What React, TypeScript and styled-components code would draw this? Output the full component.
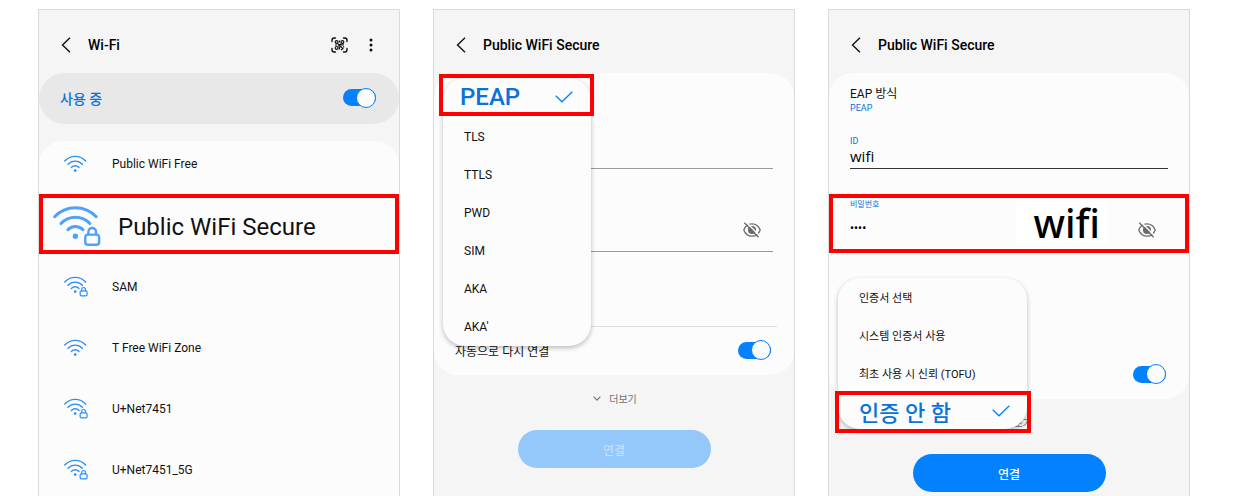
import React from "react";
import styled, { createGlobalStyle, css } from "styled-components";

const blue = "#0381fe";
const linkBlue = "#0a73d9";
const red = "#fe0000";

const GlobalStyle = createGlobalStyle`
  *, *::before, *::after { box-sizing: border-box; }
  body { margin: 0; background: #fff; }
  body, button, input { font-family: Roboto, "Noto Sans CJK KR", sans-serif; color: #111; }
  button, input { margin: 0; padding: 0; border: 0; background: none; }
  button { cursor: pointer; }
  h2, ul, p { margin: 0; padding: 0; }
  ul { list-style: none; }
  svg { display: block; flex: none; }
`;

const Page = styled.main`
  display: grid;
  grid-template-columns: repeat(3, minmax(0, 1fr));
  gap: 33px;
  min-height: 100vh;
  padding: 9px 47px 0 38px;
`;

const Phone = styled.section`
  display: flex;
  flex-direction: column;
  border: 1px solid #dadada;
  border-bottom: 0;
  background: #f5f5f5;
`;

const Header = styled.header`
  display: flex;
  align-items: center;
  height: 63px;
  padding: 7px 26px 0 22px;
`;

const IconButton = styled.button`
  display: flex;
  align-items: center;
  justify-content: center;
`;

const BackButton = styled(IconButton)`
  width: 10px;
  margin-right: 17px;
`;

const Title = styled.h2`
  flex: 1;
  font-size: 14px;
  line-height: 20px;
  font-weight: 500;
  color: #000;
`;

const HeaderActions = styled.div`
  display: flex;
  align-items: center;
  gap: 21px;
`;

const PowerBar = styled.label`
  display: flex;
  align-items: center;
  justify-content: space-between;
  height: 51px;
  padding: 0 23px 2px 21px;
  border-radius: 26px;
  background: #e8e8e8;
  color: ${linkBlue};
  font-size: 14px;
  font-weight: 500;
`;

const Toggle = styled.input`
  appearance: none;
  display: flex;
  align-items: center;
  justify-content: flex-end;
  width: 33px;
  height: 17px;
  border-radius: 9px;
  background: #b5b5b5;
  cursor: pointer;

  &:checked { background: ${blue}; }
  &::before {
    content: "";
    flex: none;
    width: 20px;
    height: 20px;
    border: 1px solid ${blue};
    border-radius: 50%;
    background: #fcfcfc;
  }
`;

const NetworkList = styled.ul`
  display: flex;
  flex: 1;
  flex-direction: column;
  gap: 23px;
  margin-top: 17px;
  padding: 3px 0 8px;
  border-radius: 24px 24px 0 0;
  background: #fcfcfc;
`;

const NetworkItem = styled.li<{ $selected?: boolean }>`
  ${(p) => p.$selected && css`margin: -11px 0 -10px;`}
`;

const NetworkName = styled.span`
  padding-top: 2px;
`;

const NetworkButton = styled.button<{ $selected?: boolean }>`
  display: flex;
  align-items: center;
  width: 100%;
  height: 38px;
  gap: 24px;
  padding-left: 25px;
  font-size: 12px;
  text-align: left;
  color: #111;
  svg { color: #2f8ef7; }

  ${(p) => p.$selected && css`
    height: 60px;
    gap: 17px;
    padding: 4px 0 0 10px;
    border: 4px solid ${red};
    font-size: 24px;
    svg { color: #4fa1fb; }
  `}
`;

const Card = styled.form`
  position: relative;
  border-radius: 24px;
  background: #fcfcfc;
`;

const Method = styled.div`
  height: 62px;
  padding: 13px 21px 0;
`;

const MethodName = styled.p`
  font-size: 12px;
  line-height: 16px;
`;

const MethodValue = styled.p`
  font-size: 9px;
  line-height: 12px;
  color: ${linkBlue};
`;

const Field = styled.div<{ $color: string }>`
  display: flex;
  align-items: flex-end;
  height: 34px;
  margin: 0 21px;
  border-bottom: 1px solid ${(p) => p.$color};
`;

const PlainPasswordField = styled(Field)`
  height: 58px;
  margin-top: 25px;
  padding: 0 12px 12px 0;
`;

const FieldColumn = styled.div`
  flex: 1;
  min-width: 0;
`;

const FieldLabel = styled.label<{ $small?: boolean }>`
  display: block;
  font-size: ${(p) => (p.$small ? 8 : 9)}px;
  line-height: ${(p) => (p.$small ? 14 : 12)}px;
  color: ${linkBlue};
`;

const TextInput = styled.input`
  display: block;
  width: 100%;
  height: 21px;
  padding-bottom: 3px;
  font-family: "Open Sans", sans-serif;
  font-size: 15px;
  color: #000;
  outline: 0;
`;

const SecretInput = styled(TextInput)`
  height: 32px;
  padding: 0;
  font-family: Roboto, sans-serif;
  font-size: 12px;
`;

const PasswordBox = styled.div`
  display: flex;
  align-items: flex-start;
  height: 59px;
  margin-top: 25px;
  padding: 0 29px 0 17px;
  border: 4px solid ${red};
`;

const PasswordHint = styled.span`
  margin: 2px 30px 0 0;
  padding: 0 8px 0 18px;
  background: #fff;
  font-family: "Noto Sans", sans-serif;
  font-size: 39px;
  line-height: 46px;
  font-weight: 500;
  color: #000;
`;

const RevealButton = styled(IconButton)`
  height: 18px;
  color: #6b6b6b;
  ${PasswordBox} & { margin-top: 23px; }
`;

const Reconnect = styled.div<{ $space: number; $line?: boolean }>`
  margin-top: ${(p) => p.$space}px;
  padding: 0 17px 0 21px;
  &::before {
    content: "";
    display: block;
    height: 1px;
    background: ${(p) => (p.$line ? "#dedede" : "transparent")};
  }
`;

const ReconnectLabel = styled.label`
  display: flex;
  align-items: center;
  justify-content: space-between;
  height: 48px;
  padding: 0 6px 2px 0;
  font-size: 12px;
`;

const ReconnectToggle = styled(Toggle)`
  margin-left: auto;
`;

const Menu = styled.ul<{ $top: number; $width: number }>`
  position: absolute;
  top: ${(p) => p.$top}px;
  left: 9px;
  width: ${(p) => p.$width}px;
  border-radius: 22px;
  background: #fcfcfc;
  box-shadow: 0 2px 5px rgba(0, 0, 0, 0.26);
`;

const Option = styled.button<{ $size?: number }>`
  display: flex;
  align-items: center;
  justify-content: space-between;
  width: 100%;
  height: 38px;
  padding: 0 21px;
  font-size: ${(p) => p.$size ?? 12}px;
  text-align: left;
`;

const SelectedOption = styled(Option)<{ $last?: boolean }>`
  width: calc(100% + 7px);
  height: 42px;
  margin: ${(p) => (p.$last ? "-1px -3px -4px" : "-4px -4px 2px")};
  padding: ${(p) => (p.$last ? "0 17px 2px 20px" : "3px 17px 0")};
  border: 4px solid ${red};
  font-weight: 500;
  color: ${linkBlue};
  svg { color: ${blue}; }
`;

const MoreButton = styled.button`
  display: flex;
  align-items: center;
  align-self: center;
  gap: 8px;
  height: 16px;
  margin: 15px 0 1px 2px;
  font-size: 10px;
  color: #707070;
`;

const ConnectButton = styled.button`
  align-self: center;
  width: 193px;
  height: 38px;
  margin-top: 23px;
  border-radius: 20px;
  background: ${blue};
  font-size: 12px;
  font-weight: 500;
  color: #fff;
  &:disabled { background: #94c7fa; color: #c2dffc; cursor: default; }
`;

const BackIcon = () => (
  <svg width="10" height="16" viewBox="0 0 10 16" fill="none" stroke="#111" strokeWidth="1.4">
    <path d="M9 .7 1.5 8 9 15.3" />
  </svg>
);

const ScanIcon = () => (
  <svg width="17" height="16" viewBox="0 0 17 16" fill="none" stroke="#111" strokeWidth="1.4">
    <path d="M1 4.6V3.2Q1 1 3.2 1h1.3M12.5 1h1.3Q16 1 16 3.2v1.4M16 11.4v1.4q0 2.2-2.2 2.2h-1.3M4.5 15H3.2Q1 15 1 12.8v-1.4" strokeLinecap="round" />
    <g strokeWidth="1.2">
      <circle cx="5.6" cy="5" r="1.4" />
      <circle cx="11.4" cy="5" r="1.4" />
      <circle cx="5.6" cy="10.9" r="1.4" />
      <path d="M8.5 3.4v2M6.8 6.8l5.6 5.4M4 8h2M10.2 7.8h2.6M8.4 9.8v2.8M12.6 9.2v1.2M9.8 12.6h1.4M10.2 6.8 7.4 9.4" />
    </g>
  </svg>
);

const DotsIcon = () => (
  <svg width="4" height="14" viewBox="0 0 4 14" fill="#111">
    <circle cx="2" cy="2" r="1.5" />
    <circle cx="2" cy="7" r="1.5" />
    <circle cx="2" cy="12" r="1.5" />
  </svg>
);

const WifiIcon = ({ locked, large }: { locked?: boolean; large?: boolean }) => {
  const h = locked ? 42 : 34;
  const scale = large ? 1 : 0.5;
  return (
    <svg width={48 * scale} height={h * scale} viewBox={`0 0 48 ${h}`} fill="none" stroke="currentColor" strokeWidth="2.9" strokeLinecap="round">
      <path d="M1.6 11.8A28.4 28.4 0 0 1 43.2 11.8M8 18.6A19.6 19.6 0 0 1 36.8 18.6M14.8 24.8A10.4 10.4 0 0 1 30 24.8" />
      <circle cx="22.4" cy="31.2" r="2.7" fill="currentColor" stroke="none" />
      {locked && (
        <>
          <rect x="32.3" y="29.6" width="13.8" height="10.2" rx="2.6" strokeWidth="2.4" />
          <path d="M35.4 29.4v-2.6a3.8 3.8 0 0 1 7.6 0v2.6" strokeWidth="2.4" />
        </>
      )}
    </svg>
  );
};

const EyeOffIcon = () => (
  <svg width="18" height="16" viewBox="0 0 18 16" fill="none" stroke="currentColor">
    <path d="M.8 8C2.2 4 5.3 1.8 9 1.8S15.8 4 17.2 8C15.8 12 12.7 14.2 9 14.2S2.2 12 .8 8Z" strokeWidth="1.3" />
    <circle cx="9" cy="8" r="4" fill="currentColor" stroke="none" />
    <path d="M2.8-.2 16.8 14" stroke="#fcfcfc" strokeWidth="1.5" />
    <path d="M1.3.8 15.6 15.3" strokeWidth="1.3" />
  </svg>
);

const CheckIcon = () => (
  <svg width="18" height="12" viewBox="0 0 18 12" fill="none" stroke="currentColor" strokeWidth="1.3">
    <path d="M.7 4.7 7 10.8 17.3.8" />
  </svg>
);

const ChevronIcon = () => (
  <svg width="8" height="5" viewBox="0 0 8 5" fill="none" stroke="currentColor" strokeWidth="1.1">
    <path d="M.6.6 4 4.2 7.4.6" />
  </svg>
);

const networks = [
  { name: "Public WiFi Free" },
  { name: "Public WiFi Secure", locked: true, selected: true },
  { name: "SAM", locked: true },
  { name: "T Free WiFi Zone" },
  { name: "U+Net7451", locked: true },
  { name: "U+Net7451_5G", locked: true },
];

const ScreenHeader = ({ title, children }: { title: string; children?: React.ReactNode }) => (
  <Header>
    <BackButton type="button" aria-label="뒤로"><BackIcon /></BackButton>
    <Title>{title}</Title>
    {children}
  </Header>
);

const AutoReconnect = ({ space, line, text }: { space: number; line?: boolean; text?: string }) => (
  <Reconnect $space={space} $line={line}>
    <ReconnectLabel>
      {text}
      <ReconnectToggle type="checkbox" aria-label="자동으로 다시 연결" defaultChecked />
    </ReconnectLabel>
  </Reconnect>
);

const Footer = ({ disabled }: { disabled?: boolean }) => (
  <>
    <MoreButton type="button"><ChevronIcon />더보기</MoreButton>
    <ConnectButton type="button" disabled={disabled}>연결</ConnectButton>
  </>
);

export default function App() {
  return (
    <>
      <GlobalStyle />
      <Page>
        <Phone>
          <ScreenHeader title="Wi-Fi">
            <HeaderActions>
              <IconButton type="button" aria-label="QR 스캔"><ScanIcon /></IconButton>
              <IconButton type="button" aria-label="메뉴"><DotsIcon /></IconButton>
            </HeaderActions>
          </ScreenHeader>
          <PowerBar>
            사용 중
            <Toggle type="checkbox" defaultChecked />
          </PowerBar>
          <NetworkList>
            {networks.map((n) => (
              <NetworkItem key={n.name} $selected={n.selected}>
                <NetworkButton type="button" $selected={n.selected}>
                  <WifiIcon locked={n.locked} large={n.selected} />
                  <NetworkName>{n.name}</NetworkName>
                </NetworkButton>
              </NetworkItem>
            ))}
          </NetworkList>
        </Phone>

        <Phone>
          <ScreenHeader title="Public WiFi Secure" />
          <Card>
            <Method />
            <Field $color="#9b9b9b"><TextInput aria-label="ID" /></Field>
            <PlainPasswordField $color="#9b9b9b">
              <SecretInput type="password" aria-label="비밀번호" />
              <RevealButton type="button" aria-label="비밀번호 표시"><EyeOffIcon /></RevealButton>
            </PlainPasswordField>
            <AutoReconnect space={74} line text="자동으로 다시 연결" />
            <Menu $top={5} $width={148}>
              <li><SelectedOption type="button" $size={24}>PEAP<CheckIcon /></SelectedOption></li>
              {["TLS", "TTLS", "PWD", "SIM", "AKA", "AKA'"].map((o) => (
                <li key={o}><Option type="button">{o}</Option></li>
              ))}
            </Menu>
          </Card>
          <Footer disabled />
        </Phone>

        <Phone>
          <ScreenHeader title="Public WiFi Secure" />
          <Card>
            <Method>
              <MethodName>EAP 방식</MethodName>
              <MethodValue>PEAP</MethodValue>
            </Method>
            <Field $color="#333">
              <FieldColumn>
                <FieldLabel htmlFor="identity">ID</FieldLabel>
                <TextInput id="identity" defaultValue="wifi" />
              </FieldColumn>
            </Field>
            <PasswordBox>
              <FieldColumn>
                <FieldLabel htmlFor="password" $small>비밀번호</FieldLabel>
                <SecretInput id="password" type="password" defaultValue="wifi" />
              </FieldColumn>
              <PasswordHint>wifi</PasswordHint>
              <RevealButton type="button" aria-label="비밀번호 표시"><EyeOffIcon /></RevealButton>
            </PasswordBox>
            <AutoReconnect space={97} />
            <Menu $top={205} $width={189}>
              {["인증서 선택", "시스템 인증서 사용", "최초 사용 시 신뢰 (TOFU)"].map((o) => (
                <li key={o}><Option type="button" $size={11}>{o}</Option></li>
              ))}
              <li><SelectedOption type="button" $size={22} $last>인증 안 함<CheckIcon /></SelectedOption></li>
            </Menu>
          </Card>
          <Footer />
        </Phone>
      </Page>
    </>
  );
}
